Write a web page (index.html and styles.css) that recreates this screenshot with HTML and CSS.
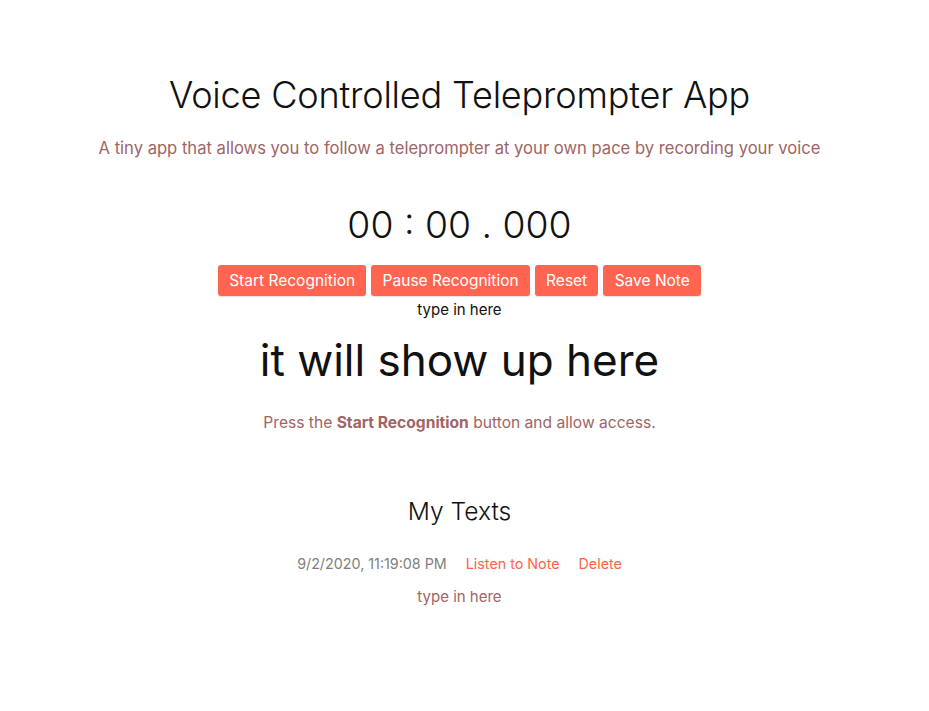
FILE: index.html
```html
<!DOCTYPE html>
<html>
<head>
<meta charset="utf-8">
<link rel="stylesheet" href="styles.css">
</head>
<body>
<div class="app">
  <h1 class="title">Voice Controlled Teleprompter App</h1>
  <p class="subtitle">A tiny app that allows you to follow a teleprompter at your own pace by recording your voice</p>
  <div class="timer">00 : 00 . 000</div>
  <div class="buttons">
    <button class="btn">Start Recognition</button>
    <button class="btn">Pause Recognition</button>
    <button class="btn">Reset</button>
    <button class="btn">Save Note</button>
  </div>
  <div class="input">type in here</div>
  <div class="display">it will show up here</div>
  <p class="hint">Press the <strong>Start Recognition</strong> button and allow access.</p>
  <h2 class="texts-title">My Texts</h2>
  <div class="note-row">
    <span class="date">9/2/2020, 11:19:08 PM</span>
    <a class="link">Listen to Note</a>
    <a class="link">Delete</a>
  </div>
  <div class="note-text">type in here</div>
</div>
</body>
</html>
```
FILE: styles.css
```css
body {
  margin: 0;
  font-family: Inter, "Noto Sans", sans-serif;
  background: #fff;
  color: #111;
}
.app {
  display: flex;
  flex-direction: column;
  align-items: center;
  text-align: center;
  padding: 71px 10px 0 0;
}
.title {
  margin: 0;
  font-size: 36.1px;
  font-weight: 300;
  line-height: 48px;
  letter-spacing: -0.2px;
}
.subtitle {
  margin: 17px 0 0;
  font-size: 16.6px;
  line-height: 24px;
  color: #a06565;
}
.timer {
  margin-top: 42px;
  font-size: 37.3px;
  font-weight: 300;
  line-height: 46px;
}
.buttons {
  margin-top: 17px;
  display: flex;
  gap: 5px;
}
.btn {
  font-family: inherit;
  font-size: 15.5px;
  color: #fff;
  background: #ff6551;
  border: none;
  border-radius: 3px;
  height: 31px;
  padding: 0 11.25px;
  box-shadow: 0 1px 1px rgba(0,0,0,0.12);
}
.input {
  margin-top: 3px;
  font-size: 15px;
  line-height: 22px;
  color: #111;
}
.display {
  margin-top: 10px;
  font-size: 44px;
  line-height: 58px;
  color: #111;
}
.hint {
  margin: 23px 0 0;
  font-size: 15.6px;
  line-height: 22px;
  color: #a06565;
}
.hint strong {
  font-weight: 700;
}
.texts-title {
  margin: 60px 0 0;
  font-size: 24.6px;
  font-weight: 300;
  line-height: 34px;
}
.note-row {
  margin-top: 26px;
  display: flex;
  gap: 19px;
  font-size: 14.3px;
  line-height: 20px;
}
.date {
  color: #808080;
}
.link {
  color: #ff6347;
  cursor: pointer;
}
.note-text {
  margin-top: 12px;
  font-size: 15px;
  line-height: 22px;
  color: #a06565;
}
```
